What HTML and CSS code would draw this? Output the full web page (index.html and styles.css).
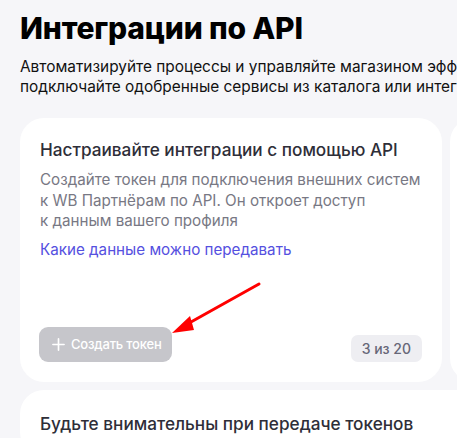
FILE: index.html
```html
<!DOCTYPE html>
<html lang="ru">
<head>
  <meta charset="UTF-8"/>
  <meta name="viewport" content="width=device-width, initial-scale=1.0"/>
  <title>Интеграции по API</title>
  <link rel="stylesheet" href="styles.css">
</head>
<body>
  <div class="page">
    <h1>Интеграции по API</h1>
    <p class="lead">Автоматизируйте процессы и управляйте магазином эффективнее:<br>подключайте одобренные сервисы из каталога или интегрируйте собственные решения</p>

    <div class="cards">
      <div class="card">
        <h2>Настраивайте интеграции с помощью API</h2>
        <p class="desc">Создайте токен для подключения внешних систем<br>к WB Партнёрам по API. Он откроет доступ<br>к данным вашего профиля</p>
        <a class="link" href="#">Какие данные можно передавать</a>

        <div class="card-footer">
          <button class="btn" disabled>
            <svg width="13" height="13" viewBox="0 0 14 14"><path d="M7 1v12M1 7h12" stroke="#fff" stroke-width="1.8" stroke-linecap="round"/></svg>
            Создать токен
          </button>
          <span class="badge">3 из 20</span>
        </div>

        <!-- pointer arrow -->
        <svg class="arrow" width="100" height="60" viewBox="0 0 100 60">
          <path d="M95 4 L18 47" stroke="#ff0000" stroke-width="3" stroke-linecap="round"/>
          <path d="M8 53 L26 36 L30 50 Z" fill="#ff0000"/>
        </svg>
      </div>
      <div class="card side"></div>
      <div class="card wide">
        <h2>Будьте внимательны при передаче токенов</h2>
      </div>
    </div>
  </div>
</body>
</html>
```

FILE: styles.css
```css
body {
  margin: 0;
  background-color: #f6f6f9;
  font-family: Inter, "Noto Sans", sans-serif;
  color: #000;
  overflow: hidden;
}

.page {
  width: 1000px;
  padding: 10px 20px 0;
}

h1 {
  margin: 0;
  font-size: 30px;
  line-height: 36px;
  font-weight: 800;
  letter-spacing: -0.2px;
}

.lead {
  margin: 11px 0 0;
  font-size: 15.4px;
  line-height: 20px;
  width: 900px;
  color: #111;
}

.cards {
  display: grid;
  grid-template-columns: 422px 422px;
  gap: 8px;
  margin-top: 21px;
}

.card {
  position: relative;
  background-color: #fff;
  border-radius: 24px;
  padding: 20px;
  display: flex;
  flex-direction: column;
}

.card.wide {
  grid-column: 1 / 3;
  padding-top: 22px;
}

h2 {
  margin: 0;
  font-size: 17.2px;
  line-height: 24px;
  font-weight: 500;
  color: #2e2e38;
}

.desc {
  margin: 8px 0 0;
  font-size: 15.2px;
  line-height: 20.5px;
  color: #787884;
}

.link {
  margin-top: 8px;
  font-size: 15.2px;
  line-height: 20px;
  color: #5550e0;
  text-decoration: none;
}

.card-footer {
  display: flex;
  align-items: flex-end;
  justify-content: space-between;
  margin-top: 67px;
}

.btn {
  display: flex;
  align-items: center;
  gap: 6px;
  height: 35px;
  padding: 0 10px 0 13px;
  border: none;
  border-radius: 9px;
  background-color: #c6c6cb;
  color: #fff;
  font-family: inherit;
  font-size: 13px;
  font-weight: 500;
  letter-spacing: -0.2px;
  margin-left: -1px;
}

.badge {
  height: 27px;
  line-height: 27px;
  padding: 0 11px;
  border-radius: 7px;
  background-color: #eeeef2;
  color: #676778;
  font-size: 14px;
  font-weight: 500;
}

.arrow {
  position: absolute;
  left: 144px;
  top: 162px;
}
```
